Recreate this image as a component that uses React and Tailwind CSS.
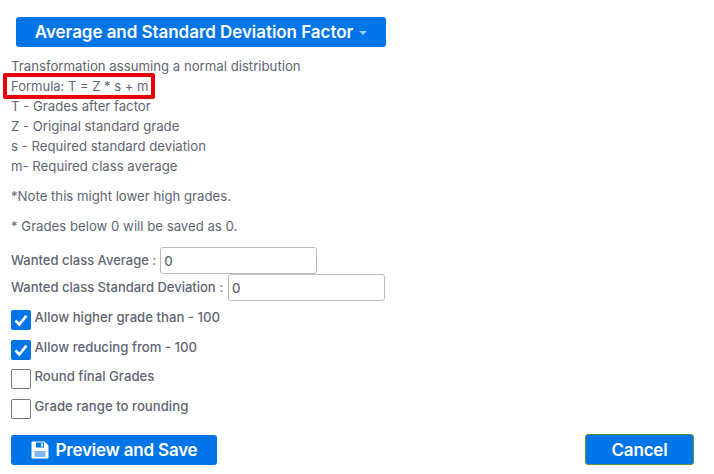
function FloppyIcon() {
  return (
    <svg width="18" height="18" viewBox="0 0 18 18" fill="currentColor" className="shrink-0">
      <path fillRule="evenodd" d="M1.5 0.5H13.5L17.5 4.5V16.5a1 1 0 0 1-1 1H1.5a1 1 0 0 1-1-1V1.5a1 1 0 0 1 1-1zM5 1.5V6.5H13V1.5zM10.2 2.2H12V5.6H10.2zM3.5 10.5v1h11v-1zM3.5 12.5v1h11v-1zM3.5 14.5v1h11v-1z" />
    </svg>
  );
}

function Check({ checked, label }) {
  return (
    <div className="flex h-[29.6px] items-start">
      <span
        className={
          checked
            ? "mt-[1px] flex h-5 w-5 items-center justify-center rounded-[2px] bg-[#0075e8] text-white"
            : "mt-[1px] h-5 w-5 rounded-[2px] border border-[#767676] bg-white"
        }
      >
        {checked && (
          <svg width="16" height="16" viewBox="0 0 16 16" fill="none" stroke="currentColor" strokeWidth="2.6">
            <path d="M2.5 8.5 L6.3 12.6 L13.5 3.6" />
          </svg>
        )}
      </span>
      <span className="ml-[3.5px] mt-[-2px] font-medium leading-[20px]">{label}</span>
    </div>
  );
}

function NumberRow({ label, wide }) {
  return (
    <div className={wide ? "flex h-[27px] items-center gap-[5px]" : "flex h-[27px] items-center gap-[4px]"}>
      <span className="mt-[-2px] text-[13px] font-medium">{label}</span>
      <span className="flex h-[27px] w-[157px] items-center rounded-[3px] border border-[#bbbbbb] bg-white pl-[3px] font-medium">
        0
      </span>
    </div>
  );
}

export default function App() {
  return (
    <div className="relative h-[474px] w-[714px] overflow-hidden bg-white px-[11px] pt-[17px] font-['Inter',sans-serif] text-[13.2px] leading-[20px] text-[#5f6672]">
      <div className="ml-[5px] flex h-[30px] w-[370px] items-center justify-center rounded-[3px] bg-[#0075e8] text-[17px] font-semibold tracking-[-0.05px] text-white">
        Average and Standard Deviation Factor
        <span className="ml-[6px] mt-[2px] h-0 w-0 border-x-[4px] border-t-[4px] border-x-transparent border-t-[#9cc7f3]"></span>
      </div>

      <div className="mt-[9px]">Transformation assuming a normal distribution</div>
      <div className="relative text-[13px]">
        Formula: T = Z * s + m
        <span className="absolute left-[-8px] top-[-3px] h-[26px] w-[152px] rounded-[2px] border-[4px] border-[#e8000f]"></span>
      </div>
      <div>T - Grades after factor</div>
      <div>Z - Original standard grade</div>
      <div>s - Required standard deviation</div>
      <div>m- Required class average</div>
      <div className="mt-[10px]">*Note this might lower high grades.</div>
      <div className="mt-[10px]">* Grades below 0 will be saved as 0.</div>

      <div className="mt-[11px]">
        <NumberRow label="Wanted class Average :" />
      </div>
      <NumberRow wide label="Wanted class Standard Deviation :" />

      <div className="mt-[8px]">
        <Check checked label="Allow higher grade than - 100" />
        <Check checked label="Allow reducing from - 100" />
        <Check label="Round final Grades" />
        <Check label="Grade range to rounding" />
      </div>

      <div className="mt-[-1px] flex items-start justify-between pr-[9px]">
        <div className="mt-[9px] flex h-[30px] w-[206px] items-center justify-center gap-[7px] rounded-[3px] bg-[#0075e8] text-[17px] font-semibold tracking-[-0.2px] text-white">
          <FloppyIcon />
          Preview and Save
        </div>
        <div className="mt-[8px] flex h-[31px] w-[109px] items-center justify-center rounded-[3px] border border-[#5f9a35] bg-[#0075e8] text-[17px] font-semibold tracking-[-0.2px] text-white">
          Cancel
        </div>
      </div>
    </div>
  );
}
